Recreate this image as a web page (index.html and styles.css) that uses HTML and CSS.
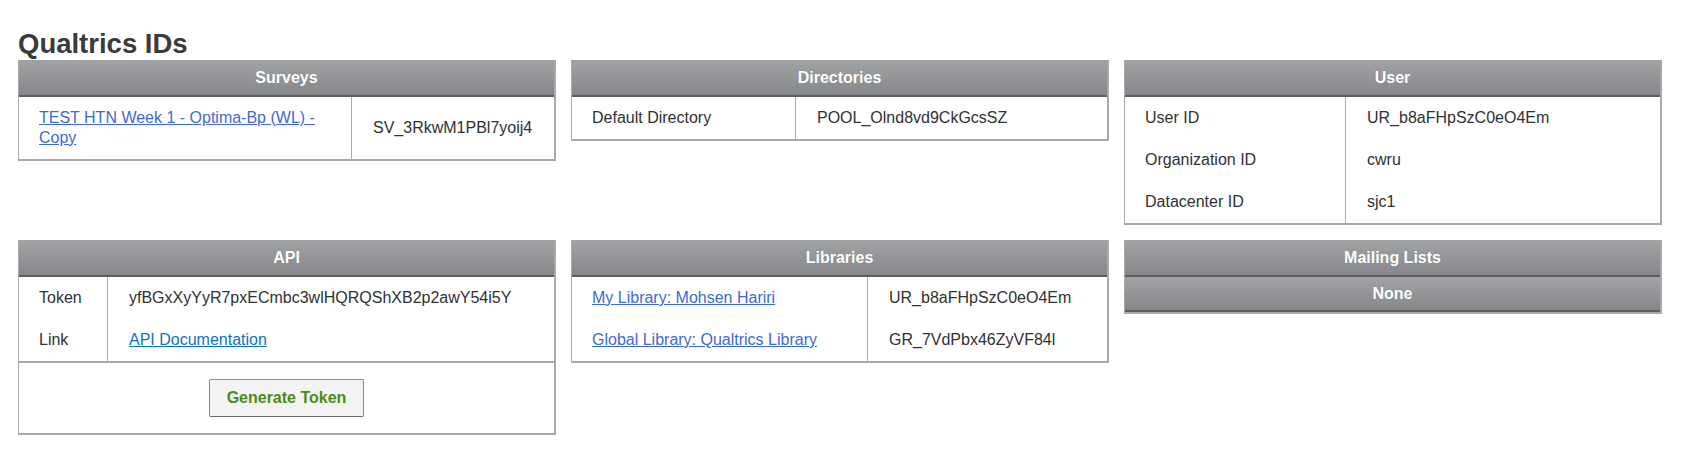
FILE: index.html
```html
<!DOCTYPE html>
<html lang="en">
<head>
<meta charset="utf-8">
<title>Qualtrics IDs</title>
<link rel="stylesheet" href="styles.css">
</head>
<body>
<div class="page">
  <h1 class="title">Qualtrics IDs</h1>
  <div class="grid">
    <table class="ids">
      <thead><tr><th colspan="2" class="head">Surveys</th></tr></thead>
      <tbody>
        <tr><td class="key key-surveys"><a class="link" href="#">TEST HTN Week 1 - Optima-Bp (WL) - Copy</a></td><td class="val">SV_3RkwM1PBl7yoij4</td></tr>
      </tbody>
    </table>

    <table class="ids">
      <thead><tr><th colspan="2" class="head">Directories</th></tr></thead>
      <tbody>
        <tr><td class="key key-dir">Default Directory</td><td class="val">POOL_Olnd8vd9CkGcsSZ</td></tr>
      </tbody>
    </table>

    <table class="ids">
      <thead><tr><th colspan="2" class="head">User</th></tr></thead>
      <tbody>
        <tr><td class="key key-user">User ID</td><td class="val">UR_b8aFHpSzC0eO4Em</td></tr>
        <tr><td class="key key-user">Organization ID</td><td class="val">cwru</td></tr>
        <tr><td class="key key-user">Datacenter ID</td><td class="val">sjc1</td></tr>
      </tbody>
    </table>

    <table class="ids">
      <thead><tr><th colspan="2" class="head">API</th></tr></thead>
      <tbody>
        <tr><td class="key key-api">Token</td><td class="val">yfBGxXyYyR7pxECmbc3wlHQRQShXB2p2awY54i5Y</td></tr>
        <tr><td class="key key-api">Link</td><td class="val"><a class="link link-doc" href="#">API Documentation</a></td></tr>
        <tr><td colspan="2" class="action"><button class="btn" type="button">Generate Token</button></td></tr>
      </tbody>
    </table>

    <table class="ids">
      <thead><tr><th colspan="2" class="head">Libraries</th></tr></thead>
      <tbody>
        <tr><td class="key key-lib"><a class="link" href="#">My Library: Mohsen Hariri</a></td><td class="val">UR_b8aFHpSzC0eO4Em</td></tr>
        <tr><td class="key key-lib"><a class="link" href="#">Global Library: Qualtrics Library</a></td><td class="val">GR_7VdPbx46ZyVF84l</td></tr>
      </tbody>
    </table>

    <table class="ids">
      <thead><tr><th colspan="2" class="head">Mailing Lists</th></tr></thead>
      <tbody>
        <tr><th colspan="2" class="head head-none">None</th></tr>
      </tbody>
    </table>
  </div>
</div>
</body>
</html>
```

FILE: styles.css
```css
html, body {
  margin: 0;
  padding: 0;
  background: #ffffff;
}

body {
  font-family: "Liberation Sans", Arial, sans-serif;
  font-size: 16px;
  color: #2f3133;
}

.page {
  padding: 29px 18px 0 18px;
}

.title {
  margin: 0 0 1px 0;
  font-size: 27.5px;
  line-height: 30px;
  font-weight: bold;
  color: #3a3a3a;
}

.grid {
  display: grid;
  grid-template-columns: 538px 538px 538px;
  column-gap: 15px;
  row-gap: 15px;
  align-items: start;
}

.ids {
  width: 538px;
  border-collapse: separate;
  border-spacing: 0;
  border-left: 1px solid #a9a9a9;
  border-right: 2px solid #a9a9a9;
  border-bottom: 2px solid #a9a9a9;
  border-top: 0;
}

.head {
  height: 37px;
  padding: 0 8px;
  box-sizing: border-box;
  background: linear-gradient(#a2a3a5, #86878a);
  color: #ffffff;
  font-weight: bold;
  font-size: 16px;
  line-height: 20px;
  text-align: center;
  border-bottom: 2px solid #5d5e61;
  text-shadow: 0 0 1px rgba(0,0,0,0.15);
}

.head-none {
  height: 35px;
}

.key,
.val {
  padding: 11px 20px 11px 20px;
  line-height: 20px;
  text-align: left;
  vertical-align: middle;
}

.key {
  border-right: 1px solid #a9a9a9;
}

.val {
  padding-left: 21px;
}

.key-surveys { width: 292px; }
.key-dir { width: 183px; }
.key-user { width: 180px; }
.key-api { width: 48px; }
.key-lib { width: 255px; }

.link {
  color: #3d6ad6;
  text-decoration: underline;
}

.link-doc {
  color: #0d73c6;
}

.action {
  border-top: 2px solid #a9a9a9;
  padding: 16px 0 16px 0;
  text-align: center;
}

.btn {
  width: 155px;
  height: 38px;
  background: #f3f3f3;
  border: 1px solid #8c8c8c;
  border-bottom-color: #6e6e6e;
  border-radius: 2px;
  color: #4b8c14;
  font-family: "Liberation Sans", Arial, sans-serif;
  font-weight: bold;
  font-size: 16px;
  padding: 0;
}
```
